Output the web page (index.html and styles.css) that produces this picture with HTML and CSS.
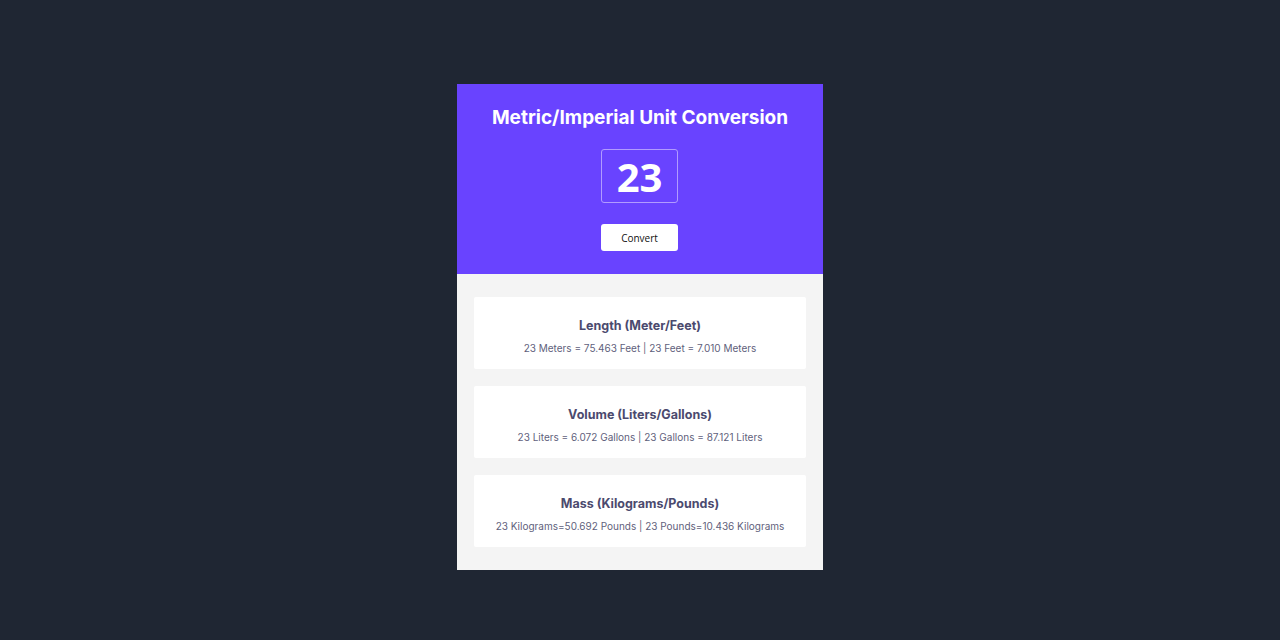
FILE: index.html
```html
<!DOCTYPE html>
<html>
<head>
<meta charset="utf-8">
<link rel="stylesheet" href="styles.css">
</head>
<body>
<main class="app">
  <section class="top">
    <h1 class="title">Metric/Imperial Unit Conversion</h1>
    <input class="num" type="text" value="23">
    <button class="btn">Convert</button>
  </section>
  <section class="results">
    <div class="card">
      <h2 class="card-title">Length (Meter/Feet)</h2>
      <p class="card-text">23 Meters = 75.463 Feet | 23 Feet = 7.010 Meters</p>
    </div>
    <div class="card">
      <h2 class="card-title">Volume (Liters/Gallons)</h2>
      <p class="card-text">23 Liters = 6.072 Gallons | 23 Gallons = 87.121 Liters</p>
    </div>
    <div class="card">
      <h2 class="card-title">Mass (Kilograms/Pounds)</h2>
      <p class="card-text">23 Kilograms=50.692 Pounds | 23 Pounds=10.436 Kilograms</p>
    </div>
  </section>
</main>
</body>
</html>
```

FILE: styles.css
```css
html, body {
  margin: 0;
  padding: 0;
}
body {
  background: #1f2633;
  font-family: Inter, "Liberation Sans", sans-serif;
  min-height: 640px;
  display: flex;
  justify-content: center;
  align-items: flex-start;
}
.app {
  width: 366px;
  margin-top: 84px;
  background: #f4f4f4;
}
.top {
  background: #6943ff;
  height: 190px;
  box-sizing: border-box;
  display: flex;
  flex-direction: column;
  align-items: center;
  padding-top: 23px;
}
.title {
  margin: 0;
  color: #fff;
  font-size: 19px;
  font-weight: 700;
  line-height: 22px;
}
.num {
  margin: 20px 1px 0 0;
  width: 77px;
  height: 54px;
  box-sizing: border-box;
  border: 1px solid #b19bff;
  border-radius: 3px;
  background: transparent;
  color: #fff;
  font-family: "Open Sans", sans-serif;
  font-weight: 700;
  font-size: 40px;
  text-align: center;
  padding: 0;
  outline: none;
}
.btn {
  margin: 21px 1px 0 0;
  width: 77px;
  height: 27px;
  border: none;
  border-radius: 3px;
  background: #fff;
  color: #111;
  font-family: "Open Sans", sans-serif;
  font-size: 10px;
  padding: 0;
}
.results {
  padding: 23px 17px 23px;
  display: flex;
  flex-direction: column;
  gap: 17px;
}
.card {
  background: #fff;
  height: 72px;
  box-sizing: border-box;
  border-radius: 2px;
  text-align: center;
  padding-top: 21px;
}
.card-title {
  margin: 0;
  font-size: 12.5px;
  font-weight: 700;
  color: #4b4a6e;
  line-height: 16px;
}
.card-text {
  margin: 7px 0 0;
  font-size: 10px;
  color: #5f5f7c;
  line-height: 14px;
}
```
